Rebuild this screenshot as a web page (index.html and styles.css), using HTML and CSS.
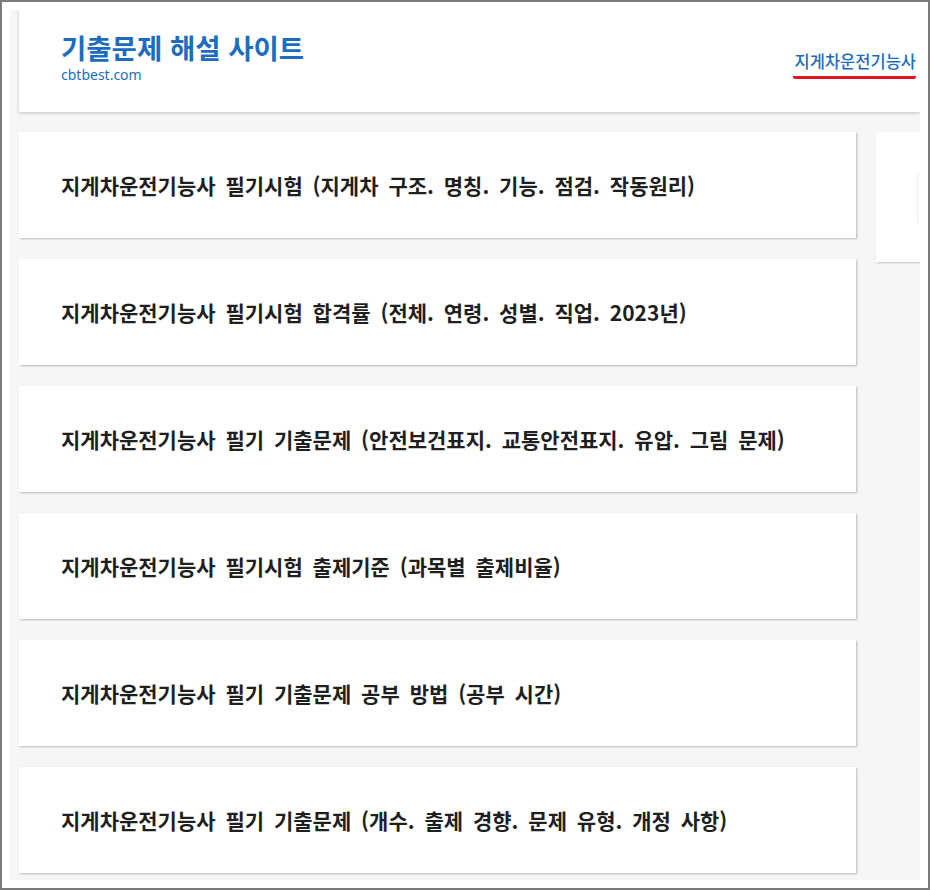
FILE: index.html
```html
<!DOCTYPE html>
<html lang="ko">
<head>
<meta charset="utf-8">
<title>기출문제 해설 사이트</title>
<link rel="stylesheet" href="styles.css">
</head>
<body>
<div class="frame">
  <div class="page">
    <header class="site-header">
      <div class="brand">
        <div class="brand-title">기출문제 해설 사이트</div>
        <div class="brand-sub">cbtbest.com</div>
      </div>
      <nav class="nav">
        <a class="nav-link" href="#">지게차운전기능사</a>
      </nav>
    </header>
    <div class="content">
      <main class="posts">
        <div class="post">지게차운전기능사 필기시험 (지게차 구조. 명칭. 기능. 점검. 작동원리)</div>
        <div class="post">지게차운전기능사 필기시험 합격률 (전체. 연령. 성별. 직업. 2023년)</div>
        <div class="post">지게차운전기능사 필기 기출문제 (안전보건표지. 교통안전표지. 유압. 그림 문제)</div>
        <div class="post">지게차운전기능사 필기시험 출제기준 (과목별 출제비율)</div>
        <div class="post">지게차운전기능사 필기 기출문제 공부 방법 (공부 시간)</div>
        <div class="post">지게차운전기능사 필기 기출문제 (개수. 출제 경향. 문제 유형. 개정 사항)</div>
      </main>
      <aside class="sidebar">
        <div class="side-card">
          <div class="side-box"></div>
        </div>
      </aside>
    </div>
  </div>
</div>
</body>
</html>
```

FILE: styles.css
```css
html, body {
  margin: 0;
  padding: 0;
  background: #ffffff;
}
body {
  font-family: "Noto Sans CJK KR", "Noto Sans", sans-serif;
}
.frame {
  box-sizing: border-box;
  width: 930px;
  height: 890px;
  border: 2px solid #7b7b7b;
  padding: 8px;
  background: #ffffff;
}
.page {
  height: 870px;
  background: #f5f6f8;
  overflow: hidden;
  padding-left: 9px;
}
.site-header {
  box-sizing: border-box;
  height: 102px;
  background: #ffffff;
  box-shadow: 0 1px 3px rgba(0, 0, 0, 0.22);
  display: flex;
  justify-content: space-between;
  align-items: center;
  padding: 0 4px 7px 42px;
}
.brand {
  display: flex;
  flex-direction: column;
}
.brand-title {
  font-size: 27.5px;
  font-weight: 700;
  color: #1c6dc1;
  line-height: 32px;
}
.brand-sub {
  font-family: "Noto Sans", sans-serif;
  font-size: 14px;
  color: #1c6dc1;
  line-height: 18px;
  margin-top: 3px;
}
.nav {
  display: flex;
  align-self: stretch;
  align-items: flex-end;
  padding-bottom: 26px;
}
.nav-link {
  font-size: 16.5px;
  font-weight: 500;
  color: #1c6dc1;
  text-decoration: none;
  line-height: 20px;
  padding: 0 0 5px 2px;
  border-bottom: 3px solid #e5141e;
  border-radius: 2px;
}
.content {
  display: flex;
  gap: 20px;
  margin-top: 20px;
}
.posts {
  flex: 0 0 837px;
  display: flex;
  flex-direction: column;
  gap: 21px;
}
.post {
  box-sizing: border-box;
  height: 106px;
  background: #ffffff;
  box-shadow: 1px 1px 2px rgba(0, 0, 0, 0.25);
  display: flex;
  align-items: center;
  padding-left: 42px;
  font-size: 21px;
  font-weight: 700;
  color: #1f1f1f;
  word-spacing: 4px;
}
.sidebar {
  flex: 0 0 300px;
}
.side-card {
  height: 130px;
  background: #ffffff;
  box-shadow: 1px 1px 2px rgba(0, 0, 0, 0.2);
  padding-top: 41px;
  padding-left: 41px;
  box-sizing: border-box;
}
.side-box {
  width: 250px;
  height: 48px;
  border: 1px solid #eeeeee;
}
```
